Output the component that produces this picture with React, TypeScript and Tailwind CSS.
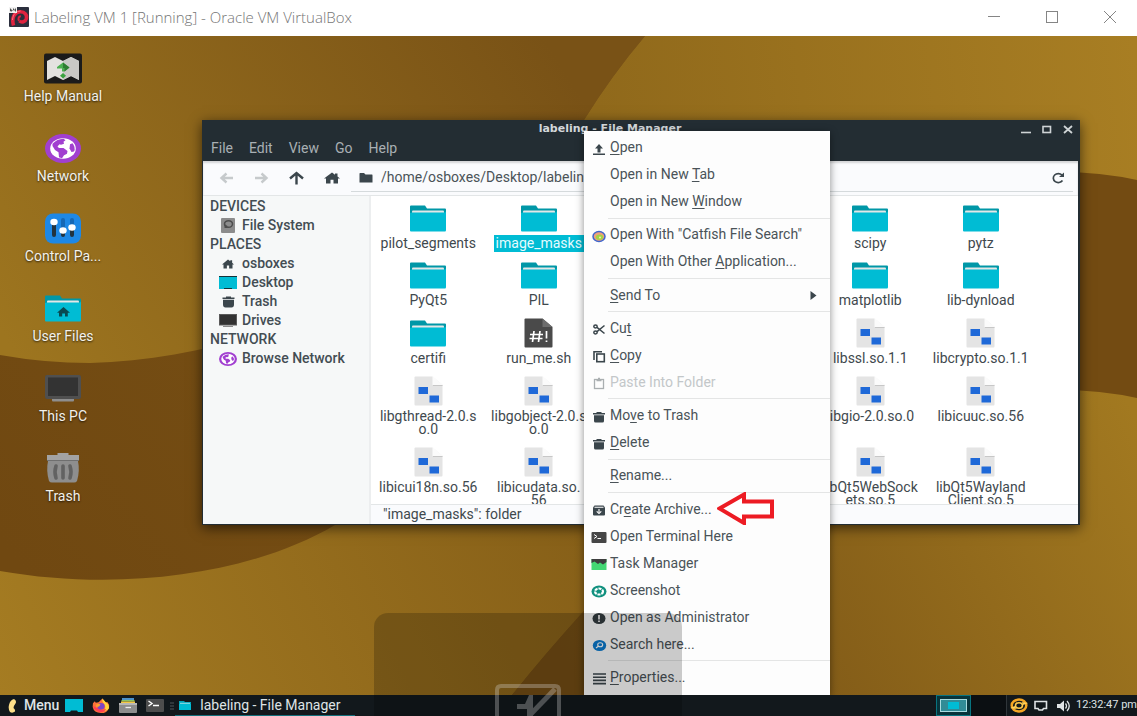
import { Fragment, type ReactNode } from "react";

type IconProps = { className?: string };

const INK = "#3b464c";

function Wallpaper() {
  return (
    <svg className="absolute inset-0 h-full w-full" viewBox="0 36 1137 659" preserveAspectRatio="none" aria-hidden="true">
      <defs>
        <linearGradient id="base" gradientUnits="userSpaceOnUse" x1="0" y1="695" x2="620" y2="420">
          <stop offset="0" stopColor="#a57c22" />
          <stop offset="1" stopColor="#835c17" />
        </linearGradient>
        <linearGradient id="topRight" gradientUnits="userSpaceOnUse" x1="600" y1="120" x2="1137" y2="60">
          <stop offset="0" stopColor="#90691b" />
          <stop offset="1" stopColor="#a87e23" />
        </linearGradient>
        <linearGradient id="inner" gradientUnits="userSpaceOnUse" x1="0" y1="330" x2="520" y2="0">
          <stop offset="0" stopColor="#9d751f" />
          <stop offset="1" stopColor="#795216" />
        </linearGradient>
        <linearGradient id="ring" gradientUnits="userSpaceOnUse" x1="0" y1="540" x2="600" y2="60">
          <stop offset="0" stopColor="#704811" />
          <stop offset="1" stopColor="#7b5416" />
        </linearGradient>
        <linearGradient id="lowerRight" gradientUnits="userSpaceOnUse" x1="580" y1="690" x2="1137" y2="420">
          <stop offset="0" stopColor="#734d14" />
          <stop offset="1" stopColor="#a27920" />
        </linearGradient>
      </defs>
      <rect y="36" width="1137" height="659" fill="url(#base)" />
      <path d="M560 36H1137V400H560Z" fill="url(#topRight)" />
      <path d="M0 36H645Q612 75 584 120C510 230 450 460 335 525C250 575 120 592 0 571Z" fill="url(#ring)" />
      <path d="M0 36H645Q612 75 584 120C500 230 300 358 90 363Q45 363 0 355Z" fill="url(#inner)" />
      <path d="M512 695Q545 654 583 612C720 460 850 172 1060 172Q1100 172 1137 180V695Z" fill="#734b12" />
      <path d="M512 695Q545 654 583 612C720 460 900 390 1060 390Q1100 390 1137 398V695Z" fill="url(#lowerRight)" />
    </svg>
  );
}

function VmLogo() {
  return (
    <svg width="20" height="20" viewBox="0 0 20 20" aria-hidden="true">
      <rect width="20" height="20" rx="1" fill="#2b2f3d" />
      <path d="M4.500 18.500C2.500 11 5 5.200 11 4.800C16 4.600 18.300 8 17.300 11.700C16.300 14.800 12.800 16 10.500 14" fill="none" stroke="#e0233f" strokeWidth="3.600" />
      <path d="M10.300 13.800C8.600 12 9.600 9.400 11.900 9.300" fill="none" stroke="#e0233f" strokeWidth="2" />
      <path d="M3.500 13C4 7 7 4.400 11.500 4" fill="none" stroke="#ff7183" strokeWidth="1" />
      <rect width="8" height="6" fill="#f1f1f1" />
      <path d="M1.500 1.500v2.500h1.500v-1H1.500M4.500 1.500v1.500h2m0-1.500v3" fill="none" stroke="#333" strokeWidth=".8" />
    </svg>
  );
}

function HelpIcon() {
  return (
    <svg width="38" height="31" viewBox="0 0 38 31" aria-hidden="true">
      <rect y=".5" width="38" height="30" rx="2" fill="#1b1b1b" />
      <path d="M3 8L11 4L19 8L27 4L35 8V27L27 23L19 27L11 23L3 27Z" fill="#e3e2df" />
      <path d="M19 8L27 4L35 8V27L27 23L19 27Z" fill="#c9c8c5" />
      <path d="M13 14L19 9.500L25.500 14.500L20.500 18.500H18V15.500H13Z" fill="#4caf50" />
      <path d="M19 9.500L25.500 14.500L20.500 18.500V15H19Z" fill="#2e7d32" />
      <path d="M19 20L22 22.800L19 25.600L16 22.800Z" fill="#3aa23f" />
    </svg>
  );
}

function Globe({ className, ring = false }: IconProps & { ring?: boolean }) {
  return (
    <svg className={className} viewBox="0 0 36 30" preserveAspectRatio="none" aria-hidden="true">
      <ellipse cx="18" cy="15" rx="18" ry="15" fill="#a13fd0" />
      <ellipse cx="18" cy="15" rx={ring ? 13.500 : 12.800} ry={ring ? 11.500 : 10.600} fill="#fff" />
      <path d="M7.500 10Q12 5 18.500 4.800L20.500 6.500L18.500 8L19 10L16 11L14.500 10.500L12.500 13L14 14.500L18.500 14.500L22.500 17.500L22 20.500L19 22L17 25L14 24L13.500 19L10 16.500L7.500 12.500Z" fill="#a13fd0" />
      <path d="M25 10.500L27.500 9.500Q31 14 29 18L26.500 18.500L24.500 15Z" fill="#a13fd0" />
    </svg>
  );
}

function ControlIcon() {
  return (
    <svg width="36" height="31" viewBox="0 0 36 31" aria-hidden="true">
      <rect y=".5" width="36" height="30" rx="8" fill="#1e88e5" />
      <path d="M9 8V22M18 16V22M27 15V22" stroke="#22333f" strokeWidth="4" strokeLinecap="round" />
      <path d="M18 7V14M27 7V12" stroke="#1668b5" strokeWidth="4" strokeLinecap="round" />
      <ellipse cx="9" cy="9" rx="3.700" ry="3.200" fill="#fff" />
      <ellipse cx="18" cy="17.500" rx="3.700" ry="3.200" fill="#fff" />
      <ellipse cx="27" cy="14.500" rx="3.700" ry="3.200" fill="#fff" />
    </svg>
  );
}

function Folder({ home = false }: { home?: boolean }) {
  return (
    <svg width="36" height="27" viewBox="0 0 36 27" aria-hidden="true">
      <path d="M0 1.500Q0 .5 1 .5H15L17 3.500H35Q36 3.500 36 4.500V12H0Z" fill="#0097a7" />
      <rect x="2" y="5.500" width="32" height="5" rx="1" fill="#e4e7e7" />
      <path d="M0 8Q1 7.500 2 7.500H34Q36 7.500 36 6V25Q36 26.500 35 26.500H1Q0 26.500 0 25.500Z" fill="#00bcd4" />
      {home && <path d="M18.500 12L25 17.800H22.800V21.500H20V18.500H17.200V21.500H14V17.800H12Z" fill="#084a52" />}
    </svg>
  );
}

function PcIcon() {
  return (
    <svg width="36" height="27" viewBox="0 0 36 27" aria-hidden="true">
      <rect width="36" height="24" rx="2" fill="#4f4f4f" />
      <rect x="3" y="2.500" width="30" height="18.500" fill="#333" />
      <path d="M7 24H29V25.500Q29 26.500 28 26.500H8Q7 26.500 7 25.500Z" fill="#8e8e8e" />
    </svg>
  );
}

function BigTrash() {
  return (
    <svg width="34" height="30" viewBox="0 0 34 30" aria-hidden="true">
      <path d="M2 8H32Q34 18 31 28Q30 29.500 28 29.500H6Q4 29.500 3 28Q0 18 2 8Z" fill="#8e8e8e" />
      <path d="M11.500 0H22.500V2H33V8H1V2H11.500Z" fill="#a3a3a3" />
      <path d="M1 7.500H33" stroke="#6f6f6f" />
      <path d="M10 13Q8 19 10 25M17 13V25M24 13Q26 19 24 25" fill="none" stroke="#626262" strokeWidth="3.600" strokeLinecap="round" />
    </svg>
  );
}

function LibFile() {
  return (
    <svg width="29" height="30" viewBox="0 0 29 30" aria-hidden="true">
      <path d="M1.500 .5H18.500L28.500 9V28.500Q28.500 29.500 27.500 29.500H1.500Q.5 29.500 .5 28.500V1.500Q.5 .5 1.500 .5Z" fill="#e4e4e4" />
      <path d="M18.500 0L29 9H18.500Z" fill="#fbfbfb" />
      <path d="M19 9.500H28.500" stroke="#c7c7c7" />
      <rect x="4.500" y="11" width="9.500" height="7" fill="#1f69d8" />
      <rect x="15.500" y="19.500" width="9.500" height="7" fill="#1f69d8" />
    </svg>
  );
}

function ScriptFile() {
  return (
    <svg width="29" height="30" viewBox="0 0 29 30" aria-hidden="true">
      <path d="M1.500 .5H18.500L28.500 9V28.500Q28.500 29.500 27.500 29.500H1.500Q.5 29.500 .5 28.500V1.500Q.5 .5 1.500 .5Z" fill="#4a4a4a" />
      <path d="M18.500 .5L28.500 9H18.500Z" fill="#6d6d6d" />
      <path d="M10 13L8.500 24M16 13L14.500 24M6 16.500H19M5.500 20.500H18.500M22.500 13V20.500M22.500 22.500V24" stroke="#fff" strokeWidth="1.700" fill="none" />
    </svg>
  );
}

function HomeGlyph({ className }: IconProps) {
  return (
    <svg className={className} viewBox="0 0 16 13" preserveAspectRatio="none" fill={INK} aria-hidden="true">
      <path d="M8 .5L11 3V1.500H13.500V5L16 7H14V12.500H9.500V8.500H6.500V12.500H2V7H0Z" />
    </svg>
  );
}

function TrashGlyph() {
  return (
    <svg width="13" height="12" viewBox="0 0 13 12" fill={INK} aria-hidden="true">
      <path d="M4 .5H9V1.500H12.500V3H.5V1.500H4ZM1 3.700H12V8.500Q12 11.500 9.500 11.500H3.500Q1 11.500 1 8.500Z" />
    </svg>
  );
}

function DiskGlyph() {
  return (
    <svg width="14" height="15" viewBox="0 0 14 15" aria-hidden="true">
      <rect width="14" height="15" rx="1" fill="#8c8c8c" />
      <ellipse cx="7.500" cy="6" rx="4" ry="3.300" fill="none" stroke="#4d4d4d" strokeWidth="1.500" />
      <path d="M3.500 6V10H6.500V8" fill="#4d4d4d" />
    </svg>
  );
}

function DesktopGlyph() {
  return (
    <svg width="18" height="13" viewBox="0 0 18 13" aria-hidden="true">
      <rect width="18" height="13" fill="#00bcd4" />
      <path d="M0 .5H18M5 12.500H13" stroke="#15333a" />
    </svg>
  );
}

function DriveGlyph() {
  return (
    <svg width="18" height="13" viewBox="0 0 18 13" aria-hidden="true">
      <rect width="18" height="11.500" fill="#5a5a5a" />
      <rect x="1" y="1" width="16" height="9.500" fill="#323232" />
      <path d="M4 12.500H14" stroke="#8a8a8a" />
    </svg>
  );
}

function Arrow({ dir, muted = false }: { dir: "left" | "right" | "up"; muted?: boolean }) {
  const d = {
    left: "M14 7H3M7.500 2.500L2.500 7L7.500 11.500",
    right: "M1 7H12M7.500 2.500L12.500 7L7.500 11.500",
    up: "M7.500 13.500V2.500M1 7.500L7.500 2L14 7.500",
  }[dir];
  return (
    <svg width="15" height="14" viewBox="0 0 15 14" aria-hidden="true">
      <path d={d} fill="none" stroke={muted ? "#c6cacc" : INK} strokeWidth="2.400" />
    </svg>
  );
}

const svg16 = (children: ReactNode) => (
  <svg width="16" height="14" viewBox="0 0 16 14" aria-hidden="true">
    {children}
  </svg>
);

const menuIcons: Record<string, ReactNode> = {
  open: svg16(<path d="M8 2L12 6.500H9.500V10.500H6.500V6.500H4ZM2 11.500H14V13H2Z" fill={INK} />),
  catfish: svg16(
    <>
      <ellipse cx="8" cy="7.500" rx="6" ry="4.900" fill="#efa07c" stroke="#3f66cc" strokeWidth="1.500" />
      <ellipse cx="8.500" cy="8.200" rx="3.700" ry="2.600" fill="#a3d445" />
      <circle cx="9" cy="8.500" r="1" fill="#eef4b0" />
    </>
  ),
  cut: svg16(
    <g fill="none" stroke={INK} strokeWidth="1.500">
      <ellipse cx="4.500" cy="4.500" rx="1.700" ry="1.400" />
      <ellipse cx="4.500" cy="10.500" rx="1.700" ry="1.400" />
      <path d="M6 5.300L13.500 11.500M6 9.700L13.500 3.500" />
    </g>
  ),
  copy: svg16(
    <g fill="none" stroke={INK} strokeWidth="1.600">
      <path d="M3 11V2.800H11" />
      <rect x="5.800" y="5" width="7.500" height="7.700" />
    </g>
  ),
  paste: svg16(
    <g fill="none" stroke="#aaafb1" strokeWidth="1.300">
      <rect x="3.500" y="3.500" width="9" height="9" />
      <path d="M5.500 4.500H10.500M7 2.500H9" strokeWidth="1.600" />
    </g>
  ),
  trash: svg16(<path d="M5.500 2H10.500V3H14V4.500H2V3H5.500ZM3 5.300H13V11Q13 12.500 11.500 12.500H4.500Q3 12.500 3 11Z" fill={INK} />),
  archive: svg16(
    <>
      <path d="M3.500 2.500H12.500L14 4.500V11.500Q14 12.500 13 12.500H3Q2 12.500 2 11.500V4.500Z" fill={INK} />
      <path d="M3.500 4.300H12.500M8 6V9M5.700 8.300L8 10.500L10.300 8.300" fill="none" stroke="#fff" strokeWidth="1.100" />
    </>
  ),
  terminal: svg16(
    <>
      <rect x=".5" y="2" width="15" height="11" rx="1" fill="#464646" />
      <path d="M3 4.500L6 6.500L3 8.500M6.500 8.500H10" fill="none" stroke="#fff" />
    </>
  ),
  task: svg16(
    <>
      <rect x=".5" y="2" width="15" height="11" fill="#43d873" />
      <path d="M.5 2H15.500V5L12 7.500L9 5.500L7 7L3.500 4.500L.5 6Z" fill="#3e3e3e" />
    </>
  ),
  shot: svg16(
    <>
      <ellipse cx="8" cy="7.500" rx="7.500" ry="6" fill="#12917f" />
      <ellipse cx="8" cy="7.500" rx="4" ry="3" fill="none" stroke="#fff" strokeWidth="2.200" strokeDasharray="3 .9" />
    </>
  ),
  admin: svg16(
    <>
      <ellipse cx="8" cy="7.500" rx="6.500" ry="5.500" fill="#343c40" />
      <path d="M8 4V8.500M8 9.500V11" stroke="#fff" strokeWidth="1.600" />
    </>
  ),
  search: svg16(
    <>
      <ellipse cx="8.500" cy="7.500" rx="6.700" ry="5.500" fill="#0b7bd0" />
      <ellipse cx="9.200" cy="6.800" rx="2.500" ry="2" fill="none" stroke="#fff" strokeWidth="1.100" />
      <path d="M7.300 8.300L5 10" stroke="#fff" strokeWidth="1.200" />
    </>
  ),
  lines: svg16(<path d="M2 3H15M2 6.200H15M2 9.400H15M2 12.600H15" stroke={INK} strokeWidth="1.600" />),
};

type MenuEntry = { icon?: string; pre?: string; key?: string; post?: string; muted?: boolean; sub?: boolean };

const menuGroups: MenuEntry[][] = [
  [
    { icon: "open", key: "O", post: "pen" },
    { pre: "Open in New ", key: "T", post: "ab" },
    { pre: "Open in New ", key: "W", post: "indow" },
  ],
  [
    { icon: "catfish", pre: 'Open With "Catfish File Search"' },
    { pre: "Open With Other ", key: "A", post: "pplication..." },
  ],
  [{ key: "S", post: "end To", sub: true }],
  [
    { icon: "cut", pre: "Cu", key: "t" },
    { icon: "copy", key: "C", post: "opy" },
    { icon: "paste", pre: "Paste Into Folder", muted: true },
  ],
  [
    { icon: "trash", pre: "Mo", key: "v", post: "e to Trash" },
    { icon: "trash", key: "D", post: "elete" },
  ],
  [{ key: "R", post: "ename..." }],
  [
    { icon: "archive", pre: "Cr", key: "e", post: "ate Archive..." },
    { icon: "terminal", pre: "Open Terminal Here" },
    { icon: "task", pre: "Task Manager" },
    { icon: "shot", pre: "Screenshot" },
    { icon: "admin", pre: "Open as Administrator" },
    { icon: "search", pre: "Search here..." },
  ],
  [{ icon: "lines", key: "P", post: "roperties..." }],
];

function ContextMenu() {
  return (
    <div role="menu" className="absolute top-[95px] bottom-0 left-[584px] flex w-[246px] flex-col bg-[#fdfdfd] pt-[3px] pb-1 shadow-[0_2px_8px_rgba(0,0,0,0.45)]">
      {menuGroups.map((group, g) => (
        <Fragment key={g}>
          {g > 0 && (
            <div role="separator" className="ml-6 flex flex-1 items-center">
              <div className="h-px w-full bg-[#e4e5e5]" />
            </div>
          )}
          {group.map((item, i) => (
            <button
              key={i}
              role="menuitem"
              disabled={item.muted}
              className={`flex h-[27px] w-full items-center pl-[7px] text-left text-[14px] whitespace-pre ${item.muted ? "text-[#c3c7c9]" : "text-[#4a5358]"}`}
            >
              <span className="mt-[2px] w-[19px]">{item.icon && menuIcons[item.icon]}</span>
              <span>
                {item.pre}
                {item.key && <span className="underline decoration-1 underline-offset-2">{item.key}</span>}
                {item.post}
              </span>
              {item.sub && (
                <svg className="mr-[13px] ml-auto" width="7" height="9" viewBox="0 0 7 9" aria-hidden="true">
                  <path d="M.5 0L6.500 4.500L.5 9Z" fill={INK} />
                </svg>
              )}
            </button>
          ))}
        </Fragment>
      ))}
    </div>
  );
}

const desktopItems: [string, ReactNode][] = [
  ["Help Manual", <HelpIcon />],
  ["Network", <Globe className="h-[29px] w-[36px]" />],
  ["Control Pa...", <ControlIcon />],
  ["User Files", <Folder home />],
  ["This PC", <PcIcon />],
  ["Trash", <BigTrash />],
];

type FileEntry = { name: string; kind: "folder" | "lib" | "script"; col: string; selected?: boolean };

const C1 = "col-start-1";
const C2 = "col-start-2";
const C5 = "col-start-5";
const C6 = "col-start-6";

const files: FileEntry[] = [
  { name: "pilot_segments", kind: "folder", col: C1 },
  { name: "image_masks", kind: "folder", col: C2, selected: true },
  { name: "scipy", kind: "folder", col: C5 },
  { name: "pytz", kind: "folder", col: C6 },
  { name: "PyQt5", kind: "folder", col: C1 },
  { name: "PIL", kind: "folder", col: C2 },
  { name: "matplotlib", kind: "folder", col: C5 },
  { name: "lib-dynload", kind: "folder", col: C6 },
  { name: "certifi", kind: "folder", col: C1 },
  { name: "run_me.sh", kind: "script", col: C2 },
  { name: "libssl.so.1.1", kind: "lib", col: C5 },
  { name: "libcrypto.so.1.1", kind: "lib", col: C6 },
  { name: "libgthread-2.0.s\no.0", kind: "lib", col: C1 },
  { name: "libgobject-2.0.s\no.0", kind: "lib", col: C2 },
  { name: "libgio-2.0.so.0", kind: "lib", col: C5 },
  { name: "libicuuc.so.56", kind: "lib", col: C6 },
  { name: "libicui18n.so.56", kind: "lib", col: C1 },
  { name: "libicudata.so.\n56", kind: "lib", col: C2 },
  { name: "libQt5WebSock\nets.so.5", kind: "lib", col: C5 },
  { name: "libQt5Wayland\nClient.so.5", kind: "lib", col: C6 },
];

const places: { label: string; icon?: ReactNode }[] = [
  { label: "DEVICES" },
  { label: "File System", icon: <DiskGlyph /> },
  { label: "PLACES" },
  { label: "osboxes", icon: <HomeGlyph className="h-[10px] w-[12px]" /> },
  { label: "Desktop", icon: <DesktopGlyph /> },
  { label: "Trash", icon: <TrashGlyph /> },
  { label: "Drives", icon: <DriveGlyph /> },
  { label: "NETWORK" },
  { label: "Browse Network", icon: <Globe ring className="h-[14px] w-[18px]" /> },
];

function FileManager() {
  return (
    <section className="absolute top-[84px] left-[202px] flex h-[405px] w-[878px] flex-col border-r-2 border-b border-l border-[#232d33] bg-[#232d33] shadow-[0_3px_12px_rgba(0,0,0,0.6)]">
      <div className="flex h-[17px] items-center justify-between pt-px pr-[5px]">
        <h1 className="flex-1 pr-1 text-center font-['DejaVu_Sans',sans-serif] text-[11px] leading-4 font-bold text-[#d3d8db]">labeling - File Manager</h1>
        <div className="flex gap-[11px]">
          <button aria-label="Minimize">
            <svg width="10" height="9" viewBox="0 0 10 9"><path d="M0 7.500H10" stroke="#cfd4d6" strokeWidth="1.600" /></svg>
          </button>
          <button aria-label="Maximize">
            <svg width="10" height="9" viewBox="0 0 10 9"><rect x="1" y="1.500" width="7.500" height="6" fill="none" stroke="#cfd4d6" strokeWidth="1.600" /></svg>
          </button>
          <button aria-label="Close">
            <svg width="10" height="9" viewBox="0 0 10 9"><path d="M1 1L9 8M9 1L1 8" stroke="#cfd4d6" strokeWidth="1.800" /></svg>
          </button>
        </div>
      </div>
      <nav className="flex h-[24px] items-center gap-4 pb-px pl-2 text-[14px] text-[#a9b0b4]">
        {["File", "Edit", "View", "Go", "Help"].map((m) => (
          <button key={m}>{m}</button>
        ))}
      </nav>
      <div className="flex h-[35px] items-center border-b border-[#e3e6e7] bg-[#fafbfd] shadow-[inset_0_2px_2px_rgba(0,0,0,0.15)]">
        <div className="flex w-[148px] items-center gap-5 pl-4">
          <button aria-label="Back"><Arrow dir="left" muted /></button>
          <button aria-label="Forward"><Arrow dir="right" muted /></button>
          <button aria-label="Up"><Arrow dir="up" /></button>
          <button aria-label="Home"><HomeGlyph className="h-[12px] w-[16px]" /></button>
        </div>
        <div className="mr-[5px] flex h-[28px] flex-1 items-center border-b border-[#d5dadc] pl-2">
          <svg width="14" height="10" viewBox="0 0 14 10" aria-hidden="true"><path d="M1 0H5L6.500 1.500H13Q13.500 1.500 13.500 2.500V9.500H.5V.5Z" fill={INK} /></svg>
          <input aria-label="Location" className="ml-2 min-w-0 flex-1 bg-transparent text-[14px] text-[#4a5358] outline-none" defaultValue="/home/osboxes/Desktop/labeling/" />
          <button aria-label="Reload" className="mr-2">
            <svg width="14" height="12" viewBox="0 0 14 12"><path d="M11.500 8.500A5 4.500 0 1 1 11 3" fill="none" stroke={INK} strokeWidth="1.700" /><path d="M13 .5V5H8Z" fill={INK} /></svg>
          </button>
        </div>
      </div>
      <div className="flex min-h-0 flex-1">
        <aside className="w-[168px] border-r-2 border-[#eceeef] bg-[#f6f8f8] pt-px text-[14px] font-medium text-[#434d53]">
          {places.map((p) =>
            p.icon ? (
              <button key={p.label} className="flex h-[19px] w-full items-center pl-4">
                <span className="mr-[5px] flex w-[18px] justify-center">{p.icon}</span>
                {p.label}
              </button>
            ) : (
              <h2 key={p.label} className="pl-[7px] leading-[19px]">{p.label}</h2>
            )
          )}
        </aside>
        <div className="flex min-w-0 flex-1 flex-col bg-white">
          <div className="grid min-h-0 flex-1 grid-cols-6 grid-rows-[57px_58px_58px_71px_71px] overflow-hidden pt-[7px] pr-[42px] pl-[2px]">
            {files.map((f) => (
              <button key={f.name} className={`flex flex-col items-center text-[14px] leading-[13px] whitespace-pre text-[#3f494e] ${f.col}`}>
                <span className="mb-[2px] flex h-[30px] items-center">
                  {f.kind === "folder" ? <Folder /> : f.kind === "script" ? <ScriptFile /> : <LibFile />}
                </span>
                <span className={f.selected ? "bg-[#00bcd4] px-[2px] py-[2px] text-[#e6fbff]" : "px-[2px] py-[2px]"}>{f.name}</span>
              </button>
            ))}
          </div>
          <footer className="h-[20px] border-t border-[#e3e6e7] bg-[#fafbfd] pl-3 text-[14px] leading-[18px] text-[#3f494e]">"image_masks": folder</footer>
        </div>
      </div>
    </section>
  );
}

function Taskbar() {
  return (
    <footer className="relative z-10 flex h-[21px] items-center overflow-hidden bg-[#12181c] text-[14px] text-[#dfe3e5]">
      <button className="flex items-center gap-[7px] pl-[7px] font-medium">
        <svg width="10" height="14" viewBox="0 0 10 14" aria-hidden="true"><path d="M7 0Q10 1.500 8.500 4.500Q6.500 7 6.500 9Q8.500 10.500 8 12.500Q5.500 14.500 3 13Q1 10 2 6Q3 1 7 0Z" fill="#fde08a" /></svg>
        Menu
      </button>
      <div className="ml-[6px] flex items-center gap-[9px]">
        <button aria-label="Show desktop">
          <svg width="18" height="13" viewBox="0 0 18 13"><path d="M0 0H18V13H13L12 11.500H6L5 13H0Z" fill="#00bcd4" /></svg>
        </button>
        <button aria-label="Firefox">
          <svg width="18" height="16" viewBox="0 0 19 16">
            <path d="M1 5L3 3L4 4.500L7 4L11 0L14 4L16.500 4Q19 7 18 10Q16 15.500 9.500 15.500Q2 15 .7 9Z" fill="#ff7139" />
            <path d="M11 0L14.500 4Q18 6 18 10Q16.500 13 13 13.500Q15 9 13 6Q10 3 11 0Z" fill="#ffd43c" />
            <path d="M1 8Q3 14.500 9.500 14.500Q14 14 15 11Q12 13 8 11Z" fill="#ff4055" />
            <ellipse cx="9.500" cy="8.300" rx="3.800" ry="3.500" fill="#7b45c8" />
            <path d="M4 7Q7 4.500 9 6.500L7.500 8.500Q5.500 8.500 5 10Z" fill="#ffa02b" />
          </svg>
        </button>
        <button aria-label="Files">
          <svg width="18" height="15" viewBox="0 0 18 15">
            <path d="M3 0H15V2H3Z" fill="#4d92c9" /><path d="M2.500 2H15.500V3.500H2.500Z" fill="#8cc466" /><path d="M2 3.500H16V5.500H2Z" fill="#f5c945" />
            <rect y="5.500" width="18" height="9.500" rx="1" fill="#8d8d8d" /><rect y="5" width="18" height="2" fill="#b7b7b7" /><path d="M6.500 9.500H12" stroke="#eee" strokeWidth="1.300" />
          </svg>
        </button>
        <button aria-label="Terminal">
          <svg width="18" height="13" viewBox="0 0 18 13"><rect width="18" height="13" rx="1" fill="#4d4d4d" /><path d="M2.500 2L6 4.500L2.500 7M7 6.500H13" fill="none" stroke="#fff" strokeWidth="1.400" /></svg>
        </button>
      </div>
      <svg className="ml-[6px]" width="4" height="8" viewBox="0 0 4 8" aria-hidden="true"><path d="M0 1H4M0 4H4M0 7H4" stroke="#4f565a" /></svg>
      <button className="ml-[1px] flex h-full w-[180px] items-center border-b border-[#12707c] pl-1">
        <svg width="12" height="9" viewBox="0 0 12 9" aria-hidden="true"><path d="M0 0H5L6 1H12V9H0Z" fill="#00a5bb" /><path d="M1 2.300H11" stroke="#bfeff5" strokeWidth=".8" /><path d="M0 3H12V9H0Z" fill="#00bcd4" /></svg>
        <span className="ml-[9px] whitespace-nowrap">labeling - File Manager</span>
      </button>
      <div className="ml-auto flex h-full items-center">
        <div className="flex h-full w-[35px] items-center justify-center border border-[#087480] bg-[#07343b]">
          <div className="flex h-[13px] w-[27px] items-center justify-center border border-[#a8dbe0] bg-[#318b96]"><div className="h-[7px] w-[11px] bg-[#00bcd4]" /></div>
        </div>
        <div className="mr-[3px] h-full w-[36px] border-r border-[#30363a] bg-[#0b0f12]" />
        <svg width="18" height="15" viewBox="0 0 18 15" aria-label="Updates">
          <ellipse cx="9" cy="7.500" rx="7.300" ry="5.900" fill="none" stroke="#f5a623" strokeWidth="2.500" />
          <ellipse cx="9" cy="7.500" rx="3.500" ry="2.800" fill="none" stroke="#ffc94a" strokeWidth="1.600" />
          <path d="M0 10L5 8L6 11ZM18 5L13 7L12 4Z" fill="#ffd15c" />
        </svg>
        <svg className="ml-[6px]" width="14" height="11" viewBox="0 0 14 11" aria-label="Display"><path d="M1 1.500H12.500V8.500H9.500L8.500 10H5L4 8.500H1Z" fill="none" stroke="#dfe3e5" strokeWidth="1.600" /></svg>
        <svg className="ml-[9px]" width="14" height="12" viewBox="0 0 14 12" aria-label="Volume"><path d="M0 4H3L7 .5V11.500L3 8H0Z" fill="#dfe3e5" /><path d="M8.500 3.500Q10.500 6 8.500 8.500M10 1Q14.500 6 10 11" fill="none" stroke="#dfe3e5" strokeWidth="1.300" /></svg>
        <span className="ml-[5px] text-[11px] whitespace-nowrap">12:32:47 pm</span>
      </div>
    </footer>
  );
}

export default function App() {
  return (
    <div className="relative flex min-h-screen flex-col overflow-hidden bg-white font-[Roboto,sans-serif]">
      <header className="flex h-[36px] items-center pb-[2px] pl-[9px]">
        <VmLogo />
        <span className="ml-[5px] font-['Open_Sans',sans-serif] text-[15px] font-light text-[#757575]">Labeling VM 1 [Running] - Oracle VM VirtualBox</span>
        <div className="ml-auto flex items-center gap-[46px] pr-[21px]">
          <button aria-label="Minimize VM"><svg width="12" height="12" viewBox="0 0 12 12"><path d="M0 5.500H12" stroke="#858585" /></svg></button>
          <button aria-label="Maximize VM"><svg width="12" height="12" viewBox="0 0 12 12"><rect x=".5" y=".5" width="11" height="11" fill="none" stroke="#858585" /></svg></button>
          <button aria-label="Close VM"><svg width="12" height="12" viewBox="0 0 12 12"><path d="M0 0L12 12M12 0L0 12" stroke="#858585" /></svg></button>
        </div>
      </header>
      <main className="relative flex-1">
        <Wallpaper />
        <div className="relative flex w-[126px] flex-col pt-4">
          {desktopItems.map(([label, icon]) => (
            <button key={label} className="flex h-[80px] flex-col items-center text-[14px] leading-4 text-[#f4f1ea] [text-shadow:0_1px_2px_rgba(0,0,0,0.7)]">
              <span className="mb-1 flex h-[32px] items-center">{icon}</span>
              {label}
            </button>
          ))}
        </div>
        <FileManager />
        <ContextMenu />
        <svg className="absolute top-[456px] left-[717px]" width="57" height="33" viewBox="0 0 57 33" aria-hidden="true">
          <path d="M2.500 16.500L27 2.500V9.500H55V24.500H27V31L2.500 16.500Z" fill="#fff" stroke="#ed1c24" strokeWidth="4" />
        </svg>
      </main>
      <Taskbar />
      <div className="pointer-events-none absolute bottom-0 left-[374px] z-20 flex h-[103px] w-[308px] items-end justify-center rounded-t-[14px] bg-black/20">
        <svg className="opacity-30" width="66" height="32" viewBox="0 0 66 32" aria-hidden="true">
          <path d="M2 32V6Q2 2 6 2H60Q64 2 64 6V32" fill="none" stroke="#ddd" strokeWidth="4" />
          <path d="M34 32L60 5" stroke="#ddd" strokeWidth="5" />
          <path d="M22 20H30L34 11H38V32H32V25H22Z" fill="#ddd" />
        </svg>
      </div>
    </div>
  );
}
